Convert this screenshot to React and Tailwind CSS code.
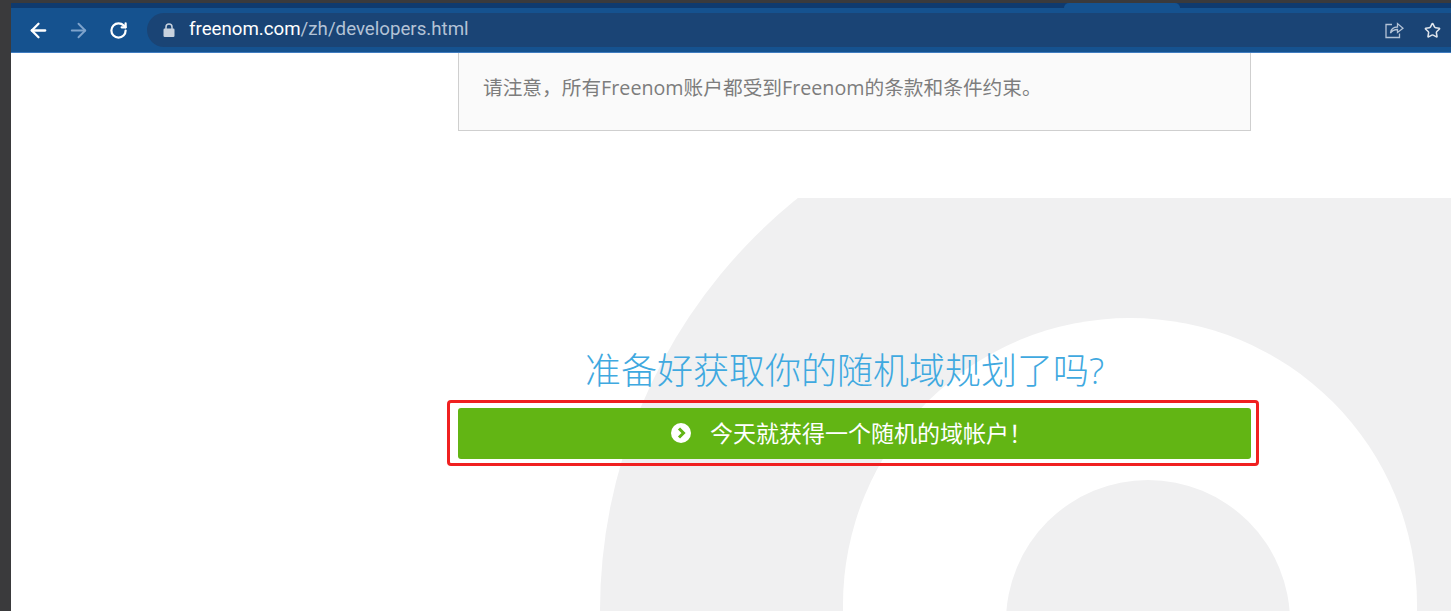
import React from 'react';
import { ArrowLeft, ArrowRight, RotateCw, Star } from 'lucide-react';

const cjk = "font-['Open_Sans','Noto_Sans_CJK_SC',sans-serif]";

const ShareIcon = () => (
  <svg width="20" height="20" viewBox="0 0 20 20" fill="none" stroke="#b4c3d6" strokeWidth="1.3" className="-ml-[2px]">
    <path d="M8 4.500H2v13h13.500v-4" />
    <path d="M6.500 13c.5-4 3-6 7-6V3.600L19 8.200l-5.500 4.300V9.500c-3 0-5.200 1-7 3.500z" />
  </svg>
);

const LockIcon = () => (
  <svg width="12" height="14" viewBox="0 0 12 14">
    <path d="M3 6V4a3 3 0 0 1 6 0v2" fill="none" stroke="#c8d2de" strokeWidth="1.500" />
    <rect x="0.500" y="5.500" width="11" height="8.500" rx="1.200" fill="#c8d2de" />
  </svg>
);

const Toolbar = () => (
  <div className="h-[53px] shrink-0">
    <div className="h-[3px] bg-[#3a3a3c]" />
    <div className="h-[5px] bg-[#0f3a6e] flex justify-end pr-[271px]">
      <div className="w-[116px] bg-[#15528f] rounded-t-md" />
    </div>
    <div className="h-[45px] bg-[#15528f] border-b border-[#3f7cc0] flex items-center pl-[16px]">
      <ArrowLeft size={23} color="#ffffff" strokeWidth={2.4} />
      <ArrowRight size={23} color="#7ea3cc" strokeWidth={2} className="ml-[17px]" />
      <RotateCw size={19} color="#ffffff" strokeWidth={2.8} className="ml-[19px]" />
      <div className="ml-[19px] flex-1 h-[34px] bg-[#1a4475] rounded-l-full flex items-center pl-[16px] pr-[10px]">
        <LockIcon />
        <span className="ml-[14px] -mt-[2px] text-[18.7px] font-['Roboto',sans-serif] text-white">
          freenom.com<span className="text-[#b4c3d6]">/zh/developers.html</span>
        </span>
        <div className="ml-auto flex items-center gap-[20px]">
          <ShareIcon />
          <Star size={17} color="#dfe5ec" strokeWidth={2.2} />
        </div>
      </div>
    </div>
  </div>
);

export default function App() {
  return (
    <div className={`relative h-[611px] w-[1451px] overflow-hidden bg-white flex ${cjk}`}>
      <div className="w-[11px] shrink-0 bg-[#3a3a3c]" />

      {/* watermark logo behind the content */}
      <svg className="absolute left-0 top-0" width="1451" height="611" viewBox="0 0 1451 611">
        <defs>
          <clipPath id="wm">
            <rect x="0" y="198" width="1451" height="413" />
          </clipPath>
        </defs>
        <g clipPath="url(#wm)">
          <circle cx="1130" cy="611" r="530" fill="#f0f0f1" />
          <circle cx="1130" cy="605" r="287" fill="#ffffff" />
          <circle cx="1148" cy="622" r="142" fill="#f0f0f1" />
        </g>
      </svg>

      <div className="relative flex-1 min-w-0 flex flex-col">
        <Toolbar />
        <div className="pl-[436px] w-[1248px]">
          <div className="ml-[11px] w-[793px] h-[78px] bg-[#fafafa] border border-t-0 border-[#cfcfcf] pl-[24px] pt-[21px] text-[19.7px] leading-[28px] text-[#7d7d7d]">
            请注意，所有Freenom账户都受到Freenom的条款和条件约束。
          </div>
          <h2 className="mt-[215px] ml-[11px] w-[793px] pr-[20px] text-center text-[36px] leading-[50px] font-light text-[#3fa9e0]">
            准备好获取你的随机域规划了吗?
          </h2>
          <div className="mt-[4px] w-[812px] h-[66px] border-[3px] border-[#f02020] rounded-[4px] flex items-center pl-[8px]">
            <button className="w-[793px] h-[51px] bg-[#62b514] rounded-[3px] flex items-center justify-center pr-[6px] text-white text-[23px]">
              <svg width="20" height="20" viewBox="0 0 20 20" className="mr-[19px]">
                <circle cx="10" cy="10" r="10" fill="#ffffff" />
                <path d="M8 5.500 12.500 10 8 14.500" fill="none" stroke="#62b514" strokeWidth="3" />
              </svg>
              今天就获得一个随机的域帐户！
            </button>
          </div>
        </div>
      </div>
    </div>
  );
}
